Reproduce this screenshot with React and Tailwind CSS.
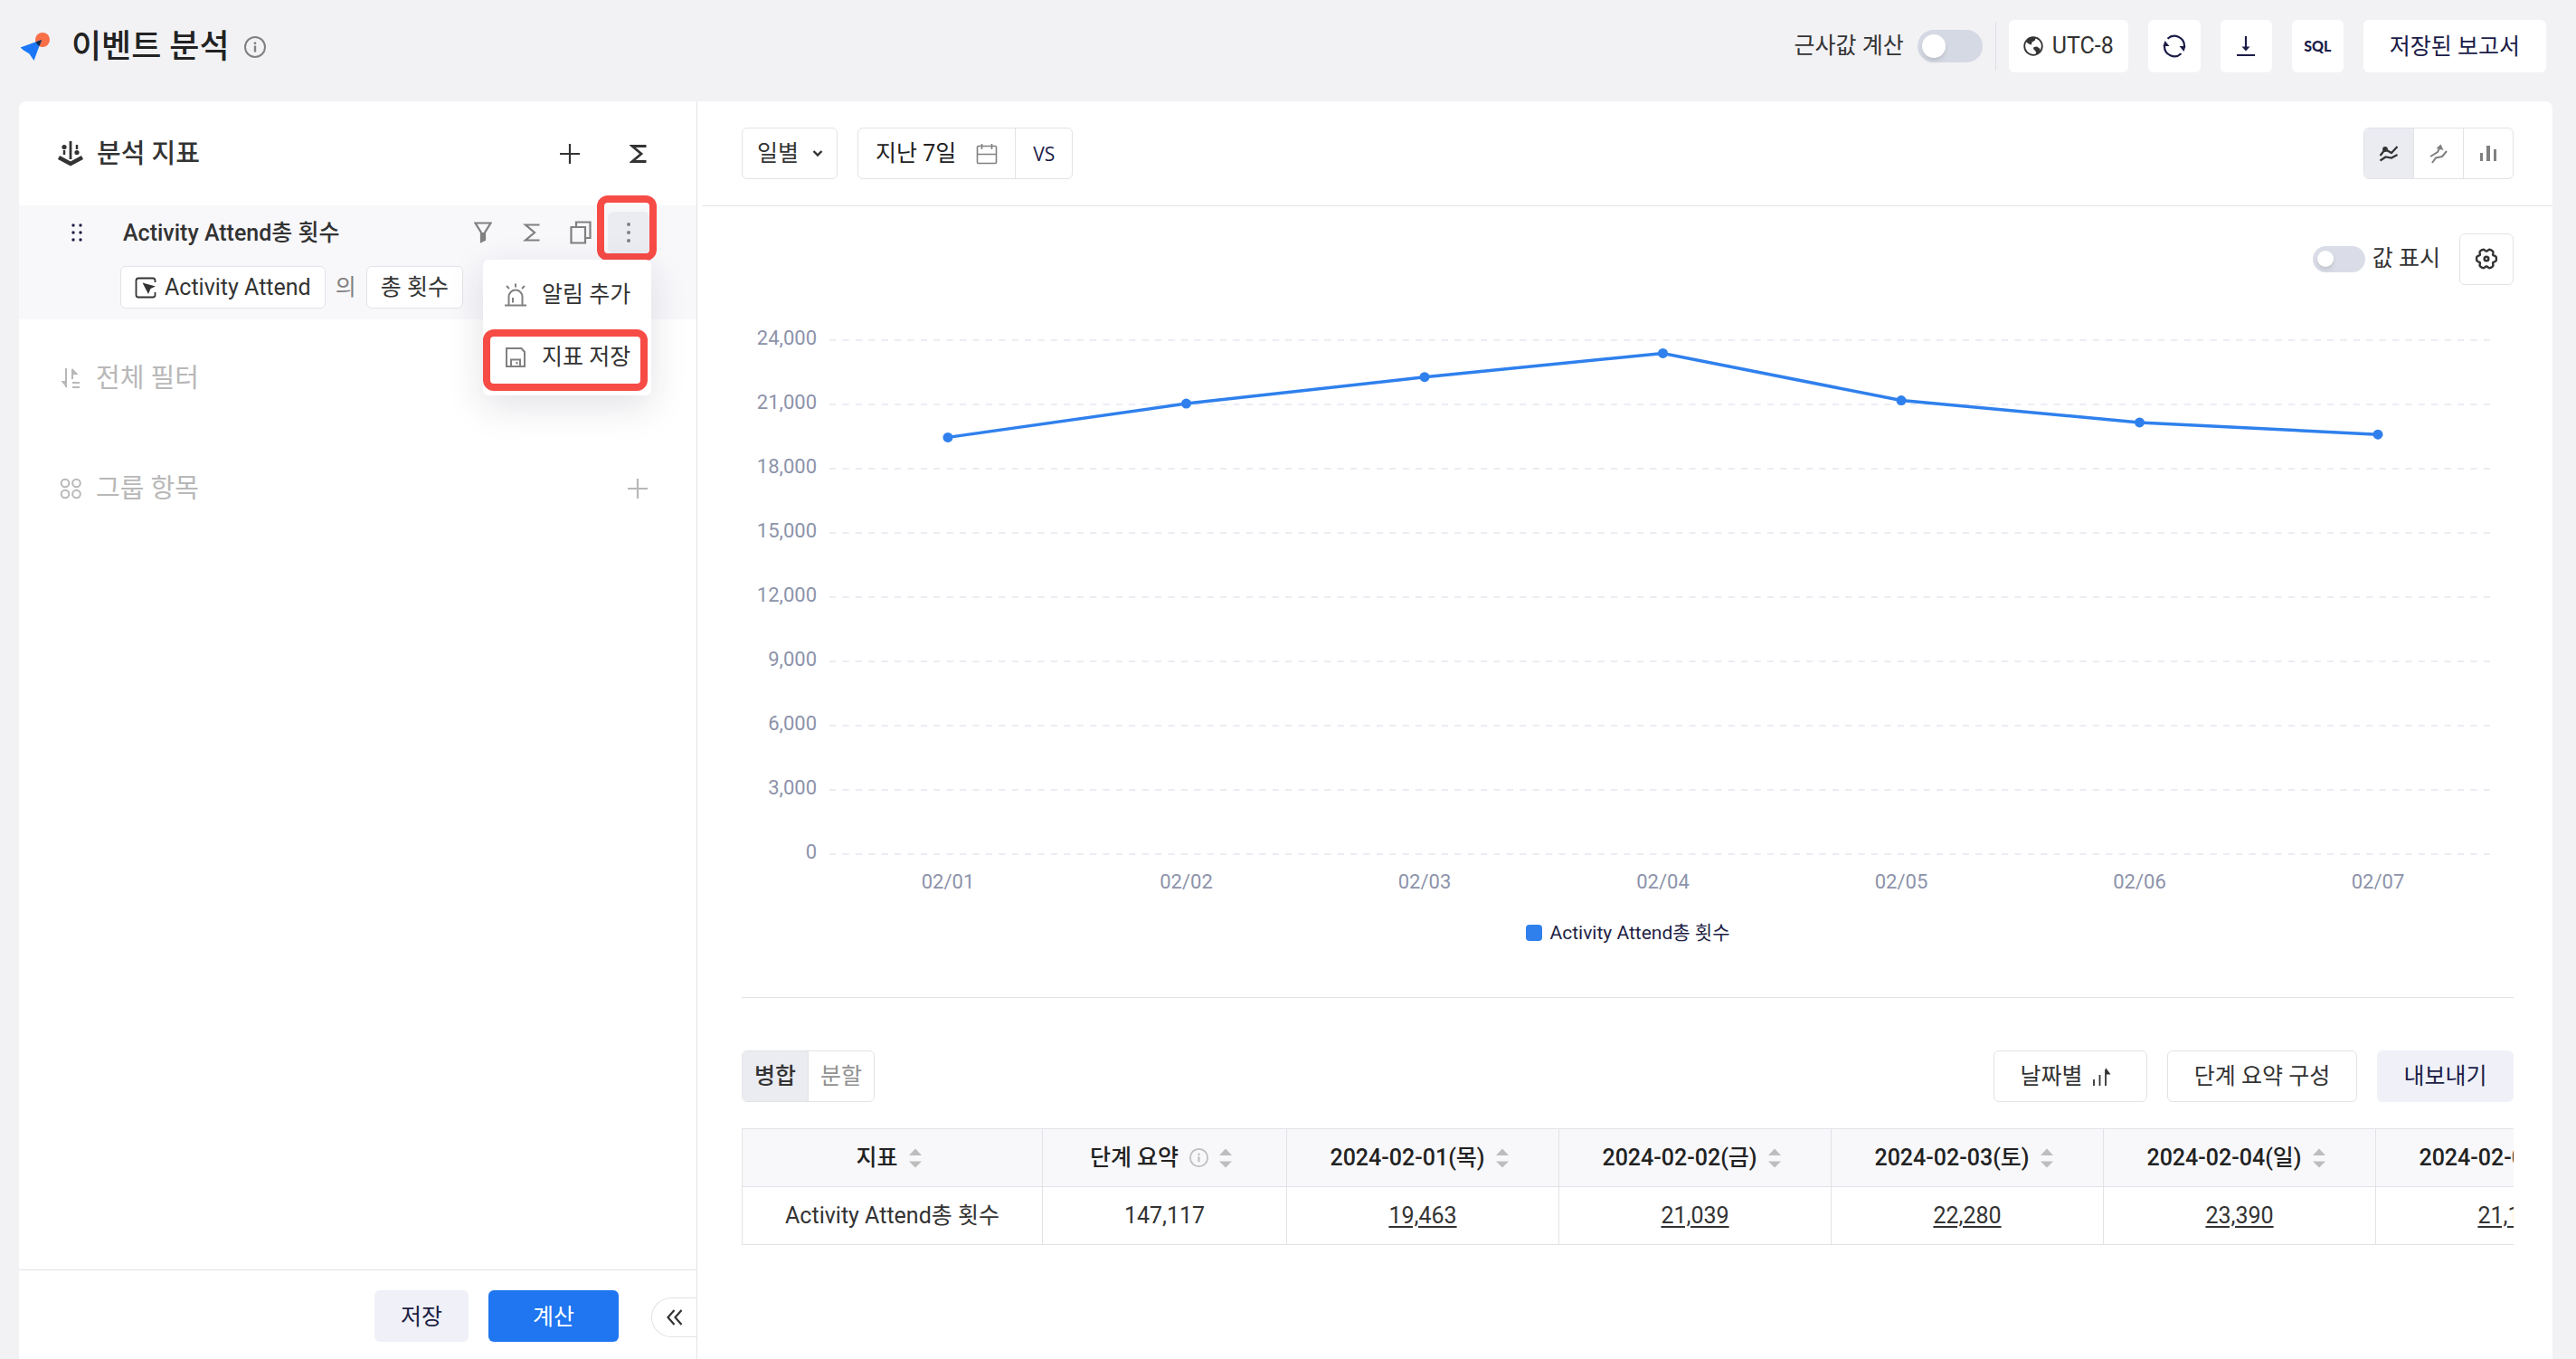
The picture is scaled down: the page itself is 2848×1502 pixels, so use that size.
import React, { useState } from 'react'

const series = [
  { date: '02/01', value: 19463 },
  { date: '02/02', value: 21039 },
  { date: '02/03', value: 22280 },
  { date: '02/04', value: 23390 },
  { date: '02/05', value: 21187 },
  { date: '02/06', value: 20158 },
  { date: '02/07', value: 19600 },
]

const days = ['목', '금', '토', '일', '월', '화', '수']
const ticks = [24000, 21000, 18000, 15000, 12000, 9000, 6000, 3000, 0]
const columns = series.slice(0, 5)

/* ---------- icons ---------- */

function Logo() {
  return (
    <svg width="34" height="34" viewBox="0 0 34 34">
      <circle cx="25" cy="10" r="8" fill="#f96f48" />
      <path d="M0.5 18.5 L24 10 L15.5 33 L10.5 25.5 L4 21.5 Z" fill="#1b77f8" />
      <path d="M17.6 12.4 L24 10 L21.6 16.8 A8 8 0 0 1 17.6 12.4 Z" fill="#1c2b45" />
    </svg>
  )
}

function InfoIcon({ size, color }) {
  return (
    <svg width={size} height={size} viewBox="0 0 24 24" fill="none" stroke={color} strokeWidth="2">
      <circle cx="12" cy="12" r="11" />
      <path d="M12 10.5 V17.5 M12 6.5 V9" strokeWidth="2.4" />
    </svg>
  )
}

function MetricIcon() {
  return (
    <svg width="28" height="28" viewBox="0 0 28 28" fill="none" stroke="#333">
      <path d="M1 18 L14 25 L27 18" strokeWidth="4.5" />
      <path d="M14 0 V20" strokeWidth="2.8" />
      <path d="M7 10 V15 M21 4 V9" strokeWidth="2.5" />
      <circle cx="7" cy="6.5" r="2.6" fill="#333" stroke="none" />
      <circle cx="21" cy="12.5" r="2.6" fill="#333" stroke="none" />
    </svg>
  )
}

function PlusIcon({ color }) {
  return (
    <svg width="24" height="24" viewBox="0 0 24 24" stroke={color} strokeWidth="2.2">
      <path d="M12 1 V23 M1 12 H23" />
    </svg>
  )
}

function SigmaIcon({ color, width }) {
  return (
    <svg width="20" height="22" viewBox="0 0 20 22" fill="none" stroke={color} strokeWidth={width}>
      <path d="M18.5 2.5 H3 L13 11 L3 19.5 H18.5" />
    </svg>
  )
}

function DragIcon() {
  return (
    <svg width="12" height="20" viewBox="0 0 12 20" fill="#1f1f45">
      {[2, 10, 18].map((y) => (
        <g key={y}>
          <circle cx="2" cy={y} r="1.7" />
          <circle cx="10" cy={y} r="1.7" />
        </g>
      ))}
    </svg>
  )
}

function FunnelIcon() {
  return (
    <svg width="20" height="24" viewBox="0 0 20 24" fill="none" stroke="#808080" strokeWidth="2.2">
      <path d="M1.5 1.5 H18.5 L12 12 V20 L8 22 V12 Z" />
      <path d="M8 12 H12 V20 L8 22 Z" fill="#808080" stroke="none" />
    </svg>
  )
}

function CopyIcon() {
  return (
    <svg width="24" height="26" viewBox="0 0 24 26" fill="none" stroke="#808080" strokeWidth="2.2">
      <path d="M1.5 7 H17 V24.5 H1.5 Z" />
      <path d="M7 7 V1.5 H22.5 V19 H17" />
    </svg>
  )
}

function EventIcon() {
  return (
    <svg width="24" height="24" viewBox="0 0 24 24" fill="none" stroke="#333" strokeWidth="1.8">
      <path d="M22.5 6 V4 Q22.5 1.5 20 1.5 H4 Q1.5 1.5 1.5 4 V20 Q1.5 22.5 4 22.5 H20 Q22.5 22.5 22.5 20 V17" />
      <path d="M8.5 6.5 L23 10.5 L17.5 13 L15 19 Z" fill="#333" stroke="none" />
    </svg>
  )
}

function AlarmIcon() {
  return (
    <svg width="24" height="26" viewBox="0 0 24 26" fill="none" stroke="#808080" strokeWidth="2">
      <path d="M0 24.5 H24" />
      <path d="M4.5 24 V15 A7.5 7.5 0 0 1 19.5 15 V24" />
      <path d="M9 16 V21.5 M12 0.5 V4.5 M2 3 L5 6 M22 3 L19 6" />
    </svg>
  )
}

function SaveIcon() {
  return (
    <svg width="24" height="24" viewBox="0 0 24 24" fill="none" stroke="#808080" strokeWidth="2">
      <path d="M2 2 H18.5 L22 6 V22 H2 Z" />
      <path d="M7 22 V14.5 H17 V22 M13.5 17 V19.5" />
    </svg>
  )
}

function FilterOrderIcon() {
  return (
    <svg width="24" height="24" viewBox="0 0 24 24" fill="none" stroke="#b8b8b8" strokeWidth="2">
      <path d="M7 1 V22 M14 2 V13" />
      <path d="M1.5 15 H8 V23 Z M14 1 L20.5 8 H14 Z" fill="#b8b8b8" stroke="none" />
      <path d="M14 17 H22 M14 22 H22" />
    </svg>
  )
}

function GroupIcon() {
  return (
    <svg width="24" height="24" viewBox="0 0 24 24" fill="none" stroke="#b8b8b8" strokeWidth="2">
      <circle cx="6" cy="6" r="4.3" />
      <circle cx="18.5" cy="6" r="4.3" />
      <circle cx="6" cy="18" r="4.3" />
      <circle cx="18.5" cy="18" r="4.3" />
    </svg>
  )
}

function GlobeIcon() {
  return (
    <svg width="22" height="22" viewBox="0 0 22 22">
      <circle cx="11" cy="11" r="9.8" fill="none" stroke="#333" strokeWidth="1.8" />
      <path d="M3 5 L8 1.5 L14 1.5 L12.5 5 L9.5 6.5 L9 9.5 L6 8.5 L4 7 Z" fill="#333" />
      <path d="M11.5 12 L15 11.5 L18.5 14 L18 17.5 L14.5 20 L13.5 16.5 L11 14 Z" fill="#333" />
    </svg>
  )
}

function RefreshIcon() {
  return (
    <svg width="26" height="26" viewBox="0 0 26 26" fill="none" stroke="#1b1c48" strokeWidth="2.2">
      <path d="M5.5 4.8 A11 11 0 0 1 24 13 M20.5 21.2 A11 11 0 0 1 2 13" />
      <path d="M18.5 13 H25.5 L23.5 19 Z M7.5 13 H0.5 L2.5 7 Z" fill="#1b1c48" stroke="none" />
    </svg>
  )
}

function DownloadIcon() {
  return (
    <svg width="20" height="24" viewBox="0 0 20 24" fill="none" stroke="#1b1c48" strokeWidth="2.2">
      <path d="M10 1 V15 M0 22 H20" />
      <path d="M5.5 12.5 H14.5 L10 17.5 Z" fill="#1b1c48" stroke="none" />
    </svg>
  )
}

function CalendarIcon() {
  return (
    <svg width="24" height="24" viewBox="0 0 24 24" fill="none" stroke="#808080" strokeWidth="1.6">
      <rect x="1.5" y="3.5" width="21" height="19" rx="1" />
      <path d="M1.5 12.5 H22.5 M6.5 1 V7 M17.5 1 V7" />
    </svg>
  )
}

function TrendIcon() {
  return (
    <svg width="22" height="20" viewBox="0 0 22 20" fill="none" stroke="#333" strokeWidth="2.2">
      <path d="M1.5 12 L7 5 L14 9 L20.5 2" />
      <path d="M1.5 17.5 L7.5 13.5 L14 14.5 L20.5 11" />
      <circle cx="7" cy="5" r="2.9" fill="#333" stroke="none" />
    </svg>
  )
}

function CumulativeIcon() {
  return (
    <svg width="20" height="22" viewBox="0 0 20 22" fill="none" stroke="#808080" strokeWidth="2">
      <path d="M1 14 L9 9 L12 3" />
      <path d="M3 21 L7 15.5 L14 14 L19 8" />
      <path d="M7.5 5 L12.5 0.5 L15.5 7 Z" fill="#808080" stroke="none" />
    </svg>
  )
}

function BarsIcon() {
  return (
    <svg width="20" height="20" viewBox="0 0 20 20" fill="#808080">
      <rect x="1" y="9" width="3" height="9" />
      <rect x="8" y="1" width="4" height="17" />
      <rect x="16" y="5" width="3" height="13" />
    </svg>
  )
}

// six rounded teeth
const gearPath =
  Array.from({ length: 72 }, (_, i) => {
    const a = (i * Math.PI) / 36
    const r = 10 + 1.3 * Math.cos(6 * a) - 0.4 * Math.cos(12 * a)
    return `${i ? 'L' : 'M'}${(13 + r * Math.cos(a)).toFixed(1)} ${(13 + r * Math.sin(a)).toFixed(1)}`
  }).join(' ') + ' Z'

function GearIcon() {
  return (
    <svg width="26" height="26" viewBox="0 0 26 26" fill="none" stroke="#333" strokeWidth="2.4" strokeLinejoin="round">
      <path d={gearPath} />
      <circle cx="13" cy="13" r="2.3" strokeWidth="2.6" />
    </svg>
  )
}

function SortedBarsIcon() {
  return (
    <svg width="22" height="22" viewBox="0 0 22 22" fill="none" stroke="#333" strokeWidth="1.8">
      <path d="M2 14 V21 M8.5 9 V21 M15 3 V21" />
      <path d="M15 1 L20.5 8.5 H15 Z" fill="#333" stroke="none" />
    </svg>
  )
}

function SortIcon() {
  return (
    <svg width="14" height="22" viewBox="0 0 14 22" fill="#bdbdbd">
      <path d="M7 0.5 L14 8 H0 Z M7 21.5 L14 14.5 H0 Z" />
    </svg>
  )
}

/* ---------- pieces ---------- */

function Header() {
  const box = 'flex h-[58px] items-center justify-center rounded-md bg-white'
  return (
    <header className="flex h-28 items-start justify-between pt-[22px] pr-[33px] pl-[22px]">
      <div className="flex h-[58px] items-center">
        <Logo />
        <h1 className="ml-[23px] pt-0.5 text-[36px] font-medium leading-none text-[#222]">이벤트 분석</h1>
        <button type="button" aria-label="정보" className="ml-4 pt-0.5">
          <InfoIcon size={24} color="#808080" />
        </button>
      </div>

      <div className="flex items-center gap-[22px]">
        <div className="flex items-center gap-[14px]">
          <label className="flex items-center gap-[15px]">
            <span>근사값 계산</span>
            <input type="checkbox" className="peer sr-only" />
            <span className="flex h-9 w-[72px] items-center rounded-full bg-[#d5d9e3] px-[5px] peer-checked:justify-end">
              <span className="size-[26px] rounded-full bg-white shadow-md" />
            </span>
          </label>
          <div className="h-[54px] w-px bg-[#dfe0e6]" />
          <button type="button" className={`${box} w-[132px] gap-2.5`}>
            <GlobeIcon />
            UTC-8
          </button>
        </div>
        <button type="button" aria-label="새로고침" className={`${box} w-[58px]`}>
          <RefreshIcon />
        </button>
        <button type="button" aria-label="다운로드" className={`${box} w-[57px]`}>
          <DownloadIcon />
        </button>
        <button type="button" className={`${box} w-[57px] font-[Lato] text-[16px] font-black text-[#1b1c48]`}>
          SQL
        </button>
        <button type="button" className={`${box} px-[29px] pt-0.5 text-[#1b1c48]`}>
          저장된 보고서
        </button>
      </div>
    </header>
  )
}

function MetricMenu() {
  const item = 'flex h-[69px] w-full items-center gap-[17px] rounded pl-6 whitespace-nowrap'
  return (
    <div className="absolute top-[60px] right-[50px] w-[186px] rounded-md bg-white pt-1 pb-2 shadow-[0_12px_40px_rgba(30,30,60,0.13)]">
      <button type="button" className={item}>
        <AlarmIcon />
        알림 추가
      </button>
      <div className="relative">
        <button type="button" className={item}>
          <SaveIcon />
          지표 저장
        </button>
        <div className="pointer-events-none absolute top-1 left-0 h-[68px] w-[182px] rounded-xl border-8 border-[#f74b46]" />
      </div>
    </div>
  )
}

function Sidebar() {
  const [open, setOpen] = useState(true)
  const chip = 'flex h-[47px] items-center rounded-md border border-[#e2e3e6] bg-white px-[15px]'
  return (
    <aside className="flex w-[750px] shrink-0 flex-col border-r border-[#e2e3e6]">
      <div className="flex h-[115px] items-center pr-[54px] pl-[43px]">
        <MetricIcon />
        <h2 className="ml-[15px] pt-px text-[29px] font-medium leading-none">분석 지표</h2>
        <div className="ml-auto flex items-center gap-[54px]">
          <button type="button" aria-label="지표 추가">
            <PlusIcon color="#333" />
          </button>
          <button type="button" aria-label="수식 추가">
            <SigmaIcon color="#333" width="2.8" />
          </button>
        </div>
      </div>

      <div className="relative h-[126px] bg-[#f8f8fb] pt-[7px] pl-[58px]">
        <div className="flex h-[46px] items-center pr-[52px]">
          <DragIcon />
          <span className="ml-[45px] pt-0.5 font-medium">Activity Attend총 횟수</span>
          <div className="ml-auto flex items-center">
            <button type="button" aria-label="필터" className="mr-[34px]">
              <FunnelIcon />
            </button>
            <button type="button" aria-label="합계" className="mr-8">
              <SigmaIcon color="#808080" width="2.2" />
            </button>
            <button type="button" aria-label="복사" className="mr-[18px]">
              <CopyIcon />
            </button>
            <div className="relative">
              <button
                type="button"
                aria-label="더보기"
                onClick={() => setOpen(!open)}
                className="flex h-[46px] w-[46px] items-center justify-center rounded-md bg-[#ebecf2]"
              >
                <svg width="6" height="24" viewBox="0 0 6 24" fill="#808080">
                  <circle cx="3" cy="3" r="2" />
                  <circle cx="3" cy="12" r="2" />
                  <circle cx="3" cy="21" r="2" />
                </svg>
              </button>
              <div className="pointer-events-none absolute -top-[18px] -right-2 h-[72px] w-[66px] rounded-xl border-8 border-[#f74b46]" />
            </div>
          </div>
        </div>
        <div className="mt-3.5 ml-[54px] flex items-center gap-[11px]">
          <button type="button" className={`${chip} gap-[9px]`}>
            <EventIcon />
            Activity Attend
          </button>
          <span className="text-[#808080]">의</span>
          <button type="button" className={chip}>
            총 횟수
          </button>
        </div>
        {open && <MetricMenu />}
      </div>

      <div className="pt-1 pr-[53px] pl-[45px] text-[29px] leading-none text-[#b8b8b8]">
        <div className="flex h-[122px] items-center gap-4">
          <FilterOrderIcon />
          <h2 className="pt-px">전체 필터</h2>
        </div>
        <div className="flex h-[122px] items-center gap-4">
          <GroupIcon />
          <h2 className="pt-px">그룹 항목</h2>
          <button type="button" aria-label="그룹 항목 추가" className="ml-auto">
            <PlusIcon color="#b8b8b8" />
          </button>
        </div>
      </div>

      <div className="mt-auto flex h-[99px] items-start justify-end border-t border-[#e2e3e6] pt-[22px]">
        <button type="button" className="h-[57px] w-[104px] rounded-md bg-[#f0f1f8] pt-0.5 text-[#1f1f45]">
          저장
        </button>
        <button type="button" className="ml-[22px] h-[57px] w-36 rounded-md bg-[#1f76f0] pt-0.5 text-white">
          계산
        </button>
        <button
          type="button"
          aria-label="접기"
          className="mt-2 ml-9 flex h-11 w-[50px] items-center justify-center rounded-l-full border border-r-0 border-[#e2e3e6]"
        >
          <svg width="18" height="18" viewBox="0 0 18 18" fill="none" stroke="#333" strokeWidth="2.2">
            <path d="M8.5 1 L1.5 9 L8.5 17 M16.5 1 L9.5 9 L16.5 17" />
          </svg>
        </button>
      </div>
    </aside>
  )
}

function Toolbar() {
  return (
    <div className="ml-1.5 flex h-[116px] items-center justify-between border-b border-[#e2e3e6] pr-[43px] pl-[43px]">
      <div className="flex items-center gap-[22px]">
        <div className="relative">
          <select
            aria-label="기간 단위"
            className="h-[57px] w-[106px] appearance-none rounded-md border border-[#e2e3e6] bg-white pl-4 outline-none"
          >
            <option>일별</option>
            <option>주별</option>
            <option>월별</option>
          </select>
          <svg className="pointer-events-none absolute top-6 right-4" width="12" height="10" viewBox="0 0 12 10" fill="none" stroke="#333" strokeWidth="2.4">
            <path d="M1.5 2 L6 6.5 L10.5 2" />
          </svg>
        </div>
        <div className="flex h-[57px] rounded-md border border-[#e2e3e6]">
          <button type="button" className="flex items-center gap-[22px] border-r border-[#e2e3e6] px-[19px] text-[#222]">
            지난 7일
            <CalendarIcon />
          </button>
          <button type="button" className="w-[62px] font-['Open_Sans'] text-[21px] text-[#1b1c48]">
            VS
          </button>
        </div>
      </div>
      <div className="flex h-[57px] w-[166px] divide-x divide-[#e2e3e6] overflow-hidden rounded-md border border-[#e2e3e6]">
        <button type="button" aria-label="추이" className="flex flex-1 items-center justify-center bg-[#ebecf2]">
          <TrendIcon />
        </button>
        <button type="button" aria-label="누적" className="flex flex-1 items-center justify-center">
          <CumulativeIcon />
        </button>
        <button type="button" aria-label="막대" className="flex flex-1 items-center justify-center">
          <BarsIcon />
        </button>
      </div>
    </div>
  )
}

function LineChart() {
  const x = (i) => 228 + i * 263.5
  const y = (v) => 595 - (v / 24000) * 568
  return (
    <svg viewBox="0 0 1959 650" className="w-full text-[22px]">
      {ticks.map((t) => (
        <g key={t}>
          <line x1="97" x2="1937" y1={y(t)} y2={y(t)} stroke="#ebedf3" strokeWidth="2" strokeDasharray="7.2 7.2" />
          <text x="83" y={y(t) + 5} textAnchor="end" fill="#8d93aa">
            {t.toLocaleString('en-US')}
          </text>
        </g>
      ))}
      <polyline
        points={series.map((p, i) => `${x(i)},${y(p.value)}`).join(' ')}
        fill="none"
        stroke="#2f80ed"
        strokeWidth="3.5"
      />
      {series.map((p, i) => (
        <g key={p.date}>
          <circle cx={x(i)} cy={y(p.value)} r="5.5" fill="#2f80ed" />
          <text x={x(i)} y="633" textAnchor="middle" fill="#8d93aa">
            {p.date}
          </text>
        </g>
      ))}
    </svg>
  )
}

function DataTable() {
  const cell = 'h-16 border border-[#e2e3e6] p-0 text-center'
  const label = 'flex items-center justify-center gap-3 pr-2'
  return (
    <div className="mt-[29px] overflow-hidden">
      <table className="w-[2107px] table-fixed border-collapse">
        <colgroup>
          <col className="w-[332px]" />
          <col className="w-[270px]" />
          {columns.map((p) => (
            <col key={p.date} className="w-[301px]" />
          ))}
        </colgroup>
        <thead className="bg-[#f8f8fb] text-[#222]">
          <tr>
            <th className={`${cell} font-medium`}>
              <span className={label}>
                지표 <SortIcon />
              </span>
            </th>
            <th className={`${cell} font-medium`}>
              <span className={label}>
                단계 요약 <InfoIcon size={21} color="#bdbdbd" /> <SortIcon />
              </span>
            </th>
            {columns.map((p, i) => (
              <th key={p.date} className={`${cell} font-medium`}>
                <span className={label}>
                  2024-{p.date.replace('/', '-')}({days[i]}) <SortIcon />
                </span>
              </th>
            ))}
          </tr>
        </thead>
        <tbody>
          <tr>
            <td className={cell}>Activity Attend총 횟수</td>
            <td className={cell}>147,117</td>
            {columns.map((p) => (
              <td key={p.date} className={cell}>
                <a href="#" className="underline decoration-2 underline-offset-3">
                  {p.value.toLocaleString('en-US')}
                </a>
              </td>
            ))}
          </tr>
        </tbody>
      </table>
    </div>
  )
}

function Report() {
  const btn = 'flex h-[57px] items-center justify-center rounded-md border'
  return (
    <main className="min-w-0 flex-1">
      <Toolbar />
      <div className="pr-[43px] pl-[49px]">
        <div className="mt-[29px] flex h-[58px] items-center justify-end">
          <label className="flex items-center gap-2">
            <input type="checkbox" className="peer sr-only" />
            <span className="flex h-[29px] w-[58px] items-center rounded-full bg-[#dadde7] px-[5px] peer-checked:justify-end">
              <span className="size-[18px] rounded-full bg-white shadow-md" />
            </span>
            <span>값 표시</span>
          </label>
          <button type="button" aria-label="차트 설정" className={`${btn} ml-[21px] w-[60px] border-[#e2e3e6]`}>
            <GearIcon />
          </button>
        </div>

        <div className="mt-[34px]">
          <LineChart />
        </div>

        <div className="mt-3 flex h-10 items-center justify-center gap-[9px] text-[21px] text-[#1f1f45]">
          <span className="size-[18px] rounded bg-[#2f80ed]" />
          Activity Attend총 횟수
        </div>

        <div className="mt-[51px] flex items-center justify-between border-t border-[#e2e3e6] pt-[58px]">
          <div className="flex h-[57px] w-[147px] overflow-hidden rounded-md border border-[#e2e3e6]">
            <button type="button" className="flex-1 border-r border-[#e2e3e6] bg-[#ebecf2] font-medium">
              병합
            </button>
            <button type="button" className="flex-1 text-[#909090]">
              분할
            </button>
          </div>
          <div className="flex gap-[22px]">
            <button type="button" className={`${btn} w-[170px] gap-2.5 border-[#e2e3e6] pr-2.5`}>
              날짜별 <SortedBarsIcon />
            </button>
            <button type="button" className={`${btn} w-[210px] border-[#e2e3e6]`}>
              단계 요약 구성
            </button>
            <button type="button" className={`${btn} w-[151px] border-[#f0f1f8] bg-[#f0f1f8] text-[#1b1c48]`}>
              내보내기
            </button>
          </div>
        </div>

        <DataTable />
      </div>
    </main>
  )
}

export default function App() {
  return (
    <div className="flex min-h-screen flex-col bg-[#f2f2f5] font-[Roboto,'Noto_Sans_CJK_KR',sans-serif] text-[25px] leading-8 text-[#333]">
      <Header />
      <div className="mr-[26px] ml-[21px] flex flex-1 rounded-t-lg bg-white">
        <Sidebar />
        <Report />
      </div>
    </div>
  )
}
